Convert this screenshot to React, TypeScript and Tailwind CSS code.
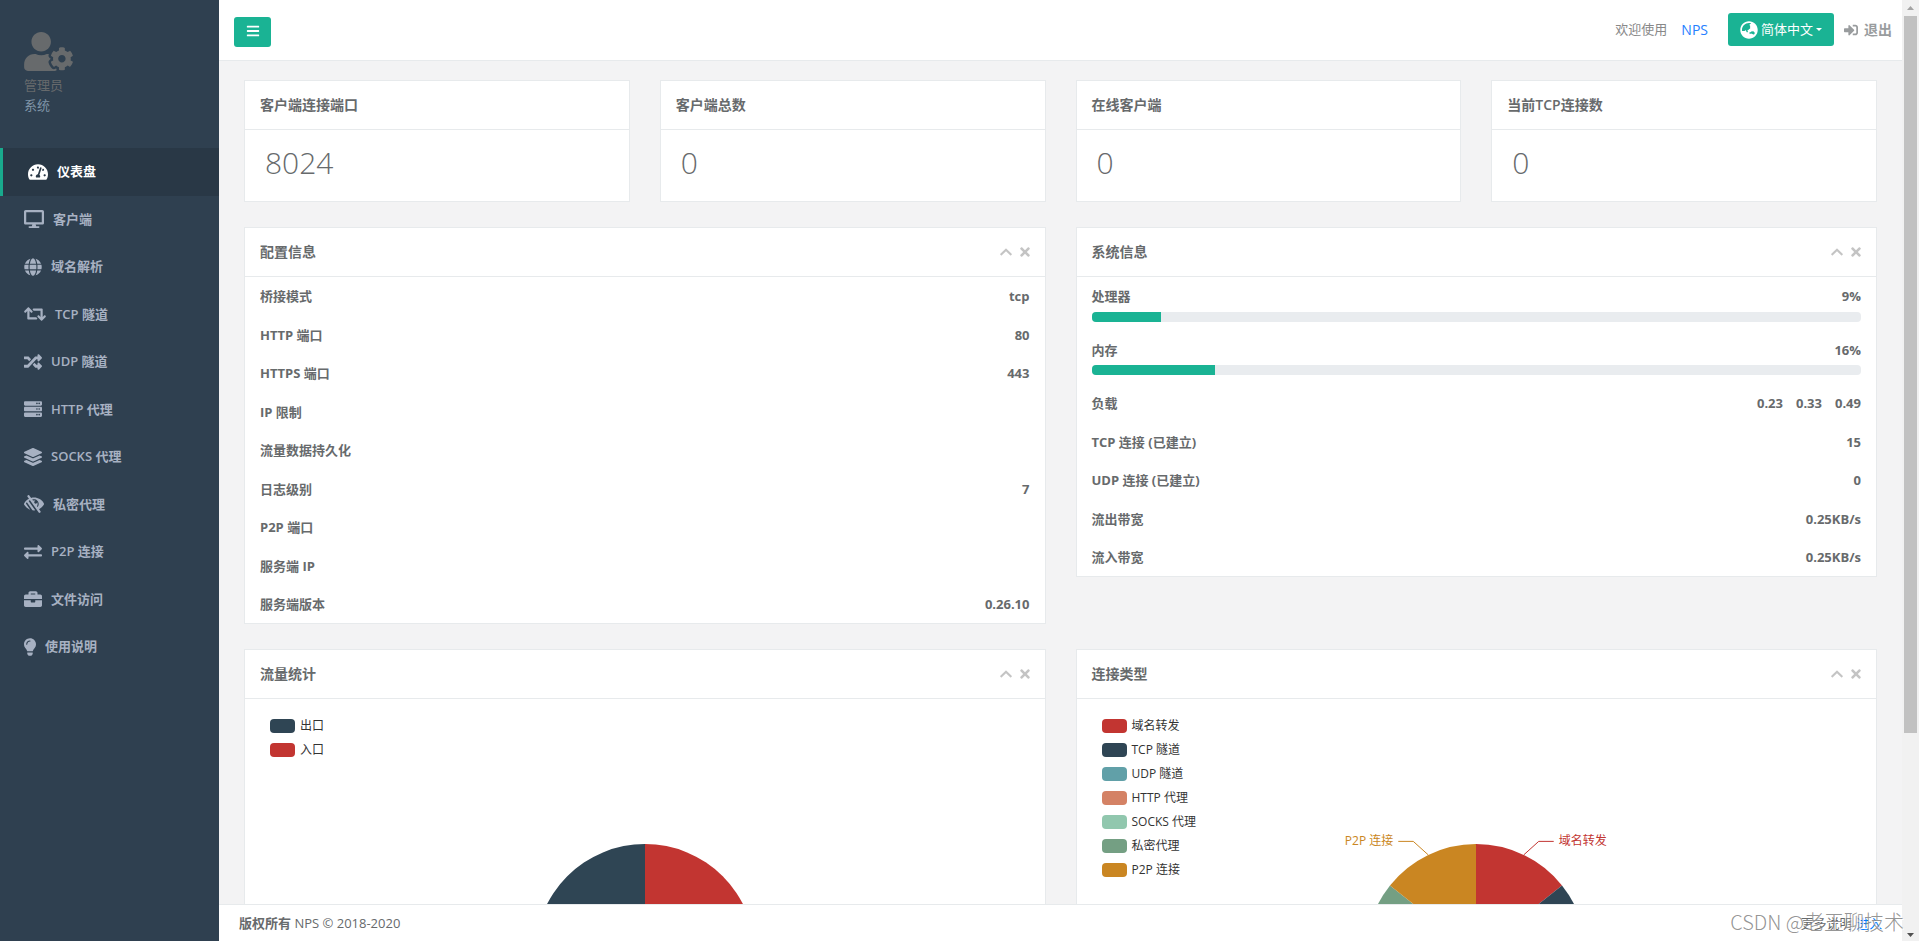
import type { ReactNode } from 'react'
import type { IconType } from 'react-icons'
import {
  FaBars,
  FaBriefcase,
  FaChevronUp,
  FaDesktop,
  FaExchangeAlt,
  FaGlobe,
  FaGlobeAsia,
  FaLayerGroup,
  FaLightbulb,
  FaLowVision,
  FaRandom,
  FaRetweet,
  FaServer,
  FaSignInAlt,
  FaTachometerAlt,
  FaTimes,
  FaUserCog,
} from 'react-icons/fa'

// ── Data ─────────────────────────────────────────────────────────────────────

interface NavItem {
  label: string
  icon: IconType
  /** Font Awesome glyphs differ in width, the label follows the glyph */
  width: string
  active?: boolean
}

const NAV: NavItem[] = [
  { label: '仪表盘', icon: FaTachometerAlt, width: 'w-5', active: true },
  { label: '客户端', icon: FaDesktop, width: 'w-5' },
  { label: '域名解析', icon: FaGlobe, width: 'w-[18px]' },
  { label: 'TCP 隧道', icon: FaRetweet, width: 'w-[22px]' },
  { label: 'UDP 隧道', icon: FaRandom, width: 'w-[18px]' },
  { label: 'HTTP 代理', icon: FaServer, width: 'w-[18px]' },
  { label: 'SOCKS 代理', icon: FaLayerGroup, width: 'w-[18px]' },
  { label: '私密代理', icon: FaLowVision, width: 'w-5' },
  { label: 'P2P 连接', icon: FaExchangeAlt, width: 'w-[18px]' },
  { label: '文件访问', icon: FaBriefcase, width: 'w-[18px]' },
  { label: '使用说明', icon: FaLightbulb, width: 'w-3' },
]

const STATS = [
  { title: '客户端连接端口', value: 8024 },
  { title: '客户端总数', value: 0 },
  { title: '在线客户端', value: 0 },
  { title: '当前TCP连接数', value: 0 },
]

const CONFIG = [
  ['桥接模式', 'tcp'],
  ['HTTP 端口', '80'],
  ['HTTPS 端口', '443'],
  ['IP 限制', ''],
  ['流量数据持久化', ''],
  ['日志级别', '7'],
  ['P2P 端口', ''],
  ['服务端 IP', ''],
  ['服务端版本', '0.26.10'],
]

const SYSTEM = [
  ['TCP 连接 (已建立)', '15'],
  ['UDP 连接 (已建立)', '0'],
  ['流出带宽', '0.25KB/s'],
  ['流入带宽', '0.25KB/s'],
]

const LOAD = ['0.23', '0.33', '0.49']

interface Slice {
  name: string
  color: string
}

const TRAFFIC: Slice[] = [
  { name: '入口', color: '#c23531' },
  { name: '出口', color: '#2f4554' },
]

const CONNECTIONS: Slice[] = [
  { name: '域名转发', color: '#c23531' },
  { name: 'TCP 隧道', color: '#2f4554' },
  { name: 'UDP 隧道', color: '#61a0a8' },
  { name: 'HTTP 代理', color: '#d48265' },
  { name: 'SOCKS 代理', color: '#91c7ae' },
  { name: '私密代理', color: '#749f83' },
  { name: 'P2P 连接', color: '#ca8622' },
]

// ── Panels ───────────────────────────────────────────────────────────────────

function Panel({
  title,
  tools = false,
  children,
}: {
  title: string
  tools?: boolean
  children: ReactNode
}) {
  return (
    <section className="border border-[#e7eaec] bg-white">
      <header className="flex h-[49px] items-center justify-between border-b border-[#e7eaec] px-[15px]">
        <h5 className="text-sm font-semibold">{title}</h5>
        {tools && (
          <div className="flex gap-2 text-[#c4c4c4]">
            <button type="button" aria-label="收起">
              <FaChevronUp className="h-[14px] w-3" />
            </button>
            <button type="button" aria-label="关闭">
              <FaTimes className="h-[14px] w-[10px]" />
            </button>
          </div>
        )}
      </header>
      {children}
    </section>
  )
}

function Row({ label, children }: { label: string; children?: ReactNode }) {
  return (
    <div className="flex justify-between px-[15px] pt-[10px] pb-[9px]">
      <dt>{label}</dt>
      <dd>{children}</dd>
    </div>
  )
}

function MeterRow({ label, percent }: { label: string; percent: number }) {
  return (
    <div className="px-[15px] pt-[10px] pb-[9px]">
      <div className="flex justify-between">
        <dt>{label}</dt>
        <dd>{percent}%</dd>
      </div>
      <div className="mt-[5px] h-[10px] overflow-hidden rounded bg-[#e9ecef]">
        <div className="h-full bg-[#1ab394]" style={{ width: `${percent}%` }} />
      </div>
    </div>
  )
}

// ── Charts ───────────────────────────────────────────────────────────────────

const CX = 200
const CY = 240
const R = 110

function point(angle: number, radius: number) {
  return [CX + radius * Math.sin(angle), CY - radius * Math.cos(angle)]
}

function PieChart({ slices, legend, labels = false }: {
  slices: Slice[]
  legend: Slice[]
  labels?: boolean
}) {
  const step = (Math.PI * 2) / slices.length

  return (
    <div className="grid p-[15px]">
      <ul className="z-10 col-start-1 row-start-1 flex flex-col gap-[10px] justify-self-start px-[10px] py-[5px] text-xs leading-[14px] text-[#333]">
        {legend.map(({ name, color }) => (
          <li key={name} className="flex items-center gap-[5px]">
            <span
              className="h-[14px] w-[25px] rounded"
              style={{ backgroundColor: color }}
            />
            {name}
          </li>
        ))}
      </ul>
      <svg
        width="400"
        height="400"
        viewBox="0 0 400 400"
        className="col-start-1 row-start-1 justify-self-center overflow-visible text-xs"
      >
        {slices.map(({ name, color }, i) => {
          const [x1, y1] = point(i * step, R)
          const [x2, y2] = point((i + 1) * step, R)
          return (
            <path
              key={name}
              d={`M${CX} ${CY}L${x1} ${y1}A${R} ${R} 0 0 1 ${x2} ${y2}Z`}
              fill={color}
            />
          )
        })}
        {labels &&
          slices.map(({ name, color }, i) => {
            const mid = (i + 0.5) * step
            const [sx, sy] = point(mid, R)
            const [, ey] = point(mid, R + 15)
            const side = mid < Math.PI ? 1 : -1
            const ex = sx + side * 15
            return (
              <g key={name}>
                <polyline
                  points={`${sx},${sy} ${ex},${ey} ${ex + side * 15},${ey}`}
                  fill="none"
                  stroke={color}
                />
                <text
                  x={ex + side * 20}
                  y={ey + 4}
                  textAnchor={side > 0 ? 'start' : 'end'}
                  fill={color}
                >
                  {name}
                </text>
              </g>
            )
          })}
      </svg>
    </div>
  )
}

// ── Chrome ───────────────────────────────────────────────────────────────────

function Sidebar() {
  return (
    <aside className="w-[219px] shrink-0 bg-[#2f4050]">
      <div className="px-6 pt-8 pb-[33px]">
        <FaUserCog className="h-[39px] w-[49px] text-[#676a6c]" />
        <p className="mt-[5px] text-[#676a6c]">管理员</p>
        <p className="text-[#8095a8]">系统</p>
      </div>
      <nav>
        {NAV.map(({ label, icon: Icon, width, active }) => (
          <a
            key={label}
            href="#"
            className={
              active
                ? 'flex items-center gap-[9px] border-l-3 border-[#19aa8d] bg-[#293846] py-[14px] pl-[25px] font-semibold text-white'
                : 'flex items-center gap-[9px] py-[14px] pl-6 font-semibold text-[#a7b1c2]'
            }
          >
            <Icon className={`h-[18px] ${width}`} />
            {label}
          </a>
        ))}
      </nav>
    </aside>
  )
}

function TopBar() {
  return (
    <header className="flex h-[61px] shrink-0 items-start border-b border-[#e7eaec] bg-white pr-[10px] pl-[15px]">
      <button
        type="button"
        aria-label="菜单"
        className="mt-[17px] flex h-[30px] w-[37px] items-center justify-center rounded-[3px] bg-[#1ab394] pb-[2px] text-sm text-white"
      >
        <FaBars />
      </button>
      <div className="mt-[13px] ml-auto flex h-[33px] items-center">
        <span className="text-[#888]">欢迎使用</span>
        <a href="#" className="ml-[14px] text-sm text-[#2680ff]">
          NPS
        </a>
        <button
          type="button"
          className="ml-5 flex h-[33px] items-center rounded-[3px] bg-[#1ab394] px-3 text-white"
        >
          <FaGlobeAsia className="mr-[3px] size-[18px]" />
          简体中文
          <svg
            width="6"
            height="3"
            viewBox="0 0 6 3"
            fill="currentColor"
            className="ml-[3px]"
          >
            <path d="M0 0h6L3 3z" />
          </svg>
        </button>
        <a
          href="#"
          className="ml-[10px] flex items-center gap-[6px] text-sm font-semibold text-[#999c9e]"
        >
          <FaSignInAlt />
          退出
        </a>
      </div>
    </header>
  )
}

function Footer() {
  return (
    <footer className="relative flex h-[37px] shrink-0 items-center justify-between border-t border-[#e7eaec] bg-white px-5 pt-[2px]">
      <p>
        <strong className="font-bold">版权所有</strong> NPS © 2018-2020
      </p>
      <p>
        更多说明{' '}
        <a href="#" className="text-[#007bff]">
          进入
        </a>
      </p>
      <span className="absolute top-[3px] -right-[2px] z-10 font-['Noto_Sans_CJK_SC',sans-serif] text-xl leading-7 font-light whitespace-nowrap text-[#888]/90 [text-shadow:1px_1px_0_#fff]">
        CSDN @老王聊技术
      </span>
    </footer>
  )
}

function ScrollTrack() {
  return (
    <div className="flex w-[17px] shrink-0 flex-col items-center bg-[#f1f1f1]">
      <svg width="17" height="16" viewBox="0 0 17 16" fill="#a3a3a3">
        <path d="M5 10h7L8.500 6z" />
      </svg>
      <div className="min-h-0 w-[13px] flex-[717] bg-[#c1c1c1]" />
      <div className="min-h-0 flex-[191]" />
      <svg width="17" height="17" viewBox="0 0 17 17" fill="#505050">
        <path d="M5 9h7l-3.500 4z" />
      </svg>
    </div>
  )
}

export default function App() {
  return (
    <div className="flex h-screen overflow-hidden bg-[#f3f3f4] font-['Open_Sans','Noto_Sans_CJK_SC',sans-serif] text-[13px] leading-normal text-[#676a6c]">
      <Sidebar />
      <div className="flex min-w-0 flex-1 flex-col">
        <TopBar />
        <main className="flex min-h-0 flex-1 flex-col gap-[25px] overflow-y-auto px-[25px] pt-[19px] [scrollbar-width:none]">
          <div className="grid grid-cols-4 gap-[30px]">
            {STATS.map(({ title, value }) => (
              <Panel key={title} title={title}>
                <p className="px-5 pt-[15px] pb-5 text-3xl font-light">
                  {value}
                </p>
              </Panel>
            ))}
          </div>

          <div className="grid grid-cols-2 items-start gap-[30px]">
            <Panel title="配置信息" tools>
              <dl className="-mb-px font-bold">
                {CONFIG.map(([label, value]) => (
                  <Row key={label} label={label}>
                    {value}
                  </Row>
                ))}
              </dl>
            </Panel>
            <Panel title="系统信息" tools>
              <dl className="-mb-px font-bold">
                <MeterRow label="处理器" percent={9} />
                <MeterRow label="内存" percent={16} />
                <Row label="负载">
                  <span className="flex gap-[13px]">
                    {LOAD.map((n) => (
                      <span key={n}>{n}</span>
                    ))}
                  </span>
                </Row>
                {SYSTEM.map(([label, value]) => (
                  <Row key={label} label={label}>
                    {value}
                  </Row>
                ))}
              </dl>
            </Panel>
          </div>

          <div className="grid grid-cols-2 gap-[30px]">
            <Panel title="流量统计" tools>
              <PieChart slices={TRAFFIC} legend={[TRAFFIC[1], TRAFFIC[0]]} />
            </Panel>
            <Panel title="连接类型" tools>
              <PieChart slices={CONNECTIONS} legend={CONNECTIONS} labels />
            </Panel>
          </div>
        </main>
        <Footer />
      </div>
      <ScrollTrack />
    </div>
  )
}
